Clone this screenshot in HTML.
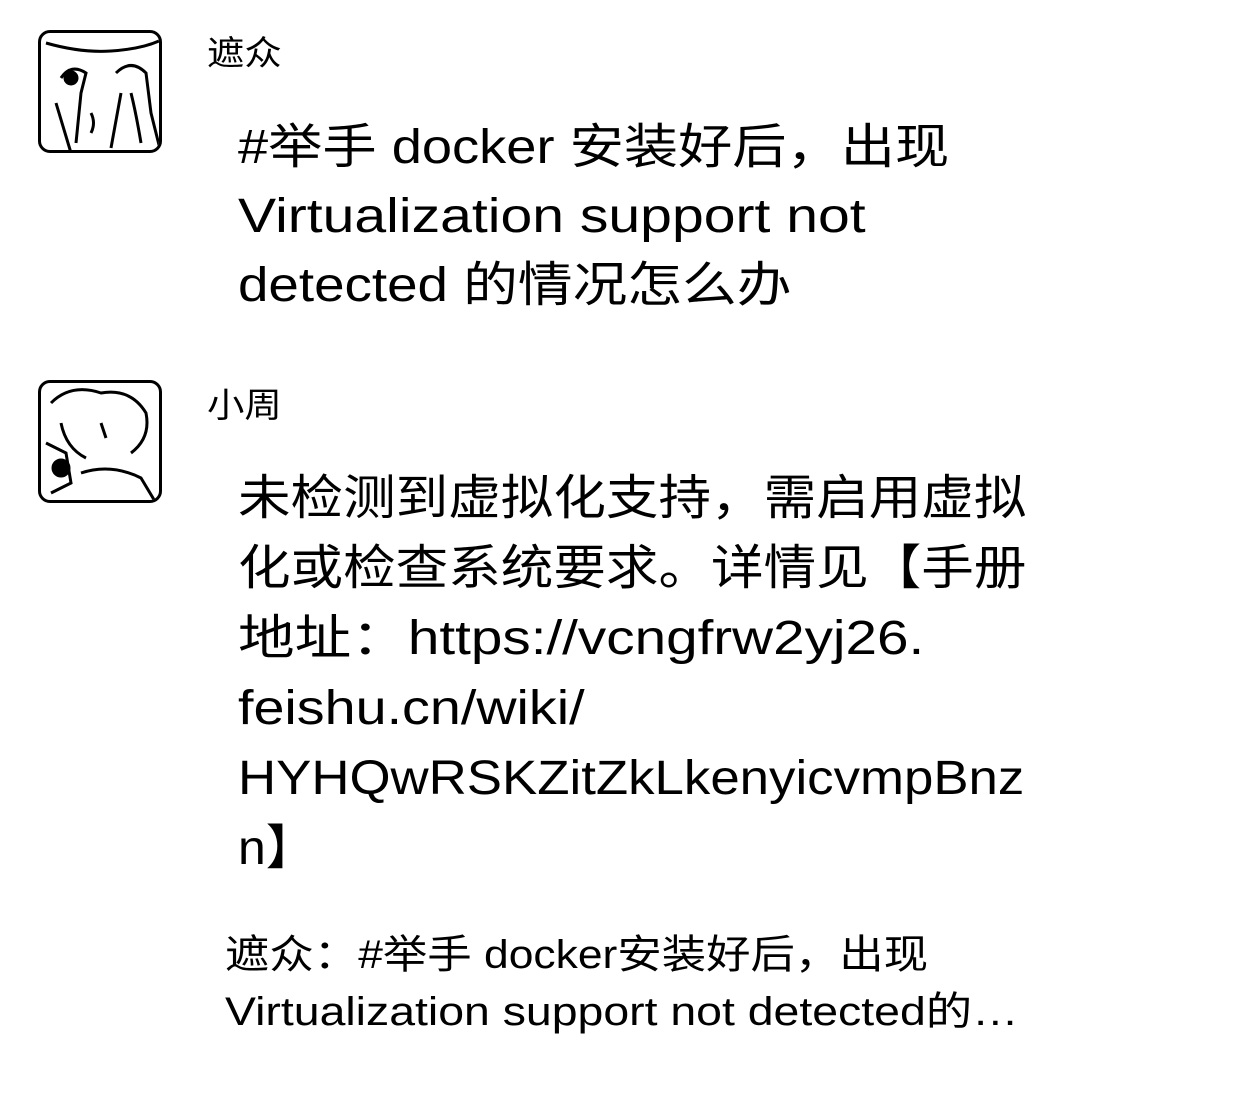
<!DOCTYPE html>
<html><head><meta charset="utf-8"><style>
body{margin:0;width:1260px;height:1108px;background:#fff;overflow:hidden;font-family:"Liberation Sans","Noto Sans CJK SC",sans-serif;color:#000}
.l{position:absolute;white-space:nowrap;line-height:1;transform-origin:0 50%}
.m{font-size:48px;left:238px}
.q{font-size:40px;left:225px}
.n{font-size:34px;left:207px}
.av{position:absolute;left:38px;width:124px;height:123px;border:3px solid #000;border-radius:12px;box-sizing:border-box;overflow:hidden}
</style></head><body>
<div class="av" style="top:30px"><svg width="124" height="123" stroke="#000" fill="none" stroke-width="3">
<path d="M5 10 Q40 20 70 18 T118 8"/><path d="M20 45 Q30 30 45 40 L40 60 L35 110"/><path d="M15 70 L30 120"/><path d="M75 40 Q90 25 105 40 L110 80 L120 120"/><path d="M80 60 L70 115"/><path d="M90 60 Q95 80 100 110"/><path d="M50 80 Q55 90 50 100"/><circle cx="30" cy="45" r="6" fill="#000"/></svg></div>
<div class="l n" style="top:37px;transform:scaleX(1.1)">遮众</div>
<div class="l m" style="top:124px;transform:scaleX(1.13)">#举手 docker 安装好后，出现</div>
<div class="l m" style="top:193px;transform:scaleX(1.19)">Virtualization support not</div>
<div class="l m" style="top:262px;transform:scaleX(1.14)">detected 的情况怎么办</div>
<div class="av" style="top:380px"><svg width="124" height="123" stroke="#000" fill="none" stroke-width="3">
<path d="M10 20 Q30 0 60 10 Q90 5 105 30 Q110 55 90 70"/><path d="M20 40 Q25 65 45 75"/><path d="M5 60 L25 70 L30 100 L10 110"/><path d="M40 90 Q70 80 100 95 L115 120"/><path d="M60 40 L65 55"/><circle cx="20" cy="85" r="8" fill="#000"/></svg></div>
<div class="l n" style="top:389px;transform:scaleX(1.1)">小周</div>
<div class="l m" style="top:475px;transform:scaleX(1.095)">未检测到虚拟化支持，需启用虚拟</div>
<div class="l m" style="top:545px;transform:scaleX(1.095)">化或检查系统要求。详情见【手册</div>
<div class="l m" style="top:615px;transform:scaleX(1.18)">地址：https://vcngfrw2yj26.</div>
<div class="l m" style="top:685px;transform:scaleX(1.16)">feishu.cn/wiki/</div>
<div class="l m" style="top:755px;transform:scaleX(1.10)">HYHQwRSKZitZkLkenyicvmpBnz</div>
<div class="l m" style="top:825px;transform:scaleX(1.04)">n】</div>
<div class="l q" style="top:935px;transform:scaleX(1.11)">遮众：#举手 docker安装好后，出现</div>
<div class="l q" style="top:992px;transform:scaleX(1.16)">Virtualization support not detected的…</div>
</body></html>
